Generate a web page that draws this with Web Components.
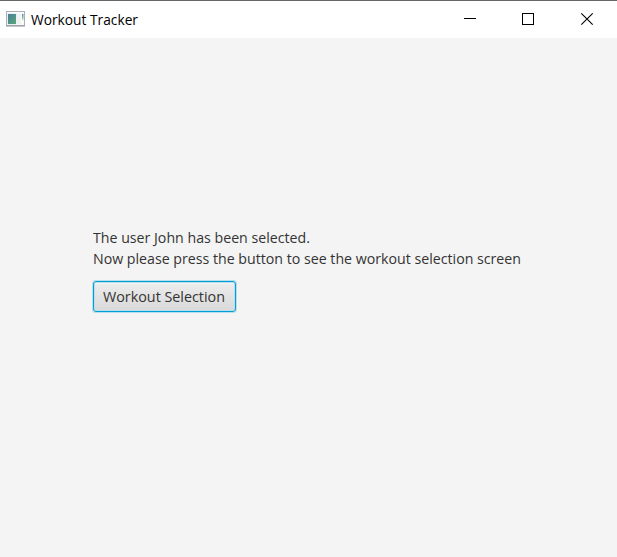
<!DOCTYPE html>
<html lang="en">
<head>
<meta charset="utf-8">
<title>Workout Tracker</title>
<style>
html,body{margin:0;height:100%;overflow:hidden;background:#f4f4f4}
</style>
</head>
<body>
<app-window>
  <title-bar slot="bar"><fit-text width="107">Workout Tracker</fit-text></title-bar>
  <message-label><fit-text width="217">The user John has been selected.</fit-text><fit-text width="428">Now please press the button to see the workout selection screen</fit-text></message-label>
  <push-button><fit-text width="122">Workout Selection</fit-text></push-button>
</app-window>
<script>
const define = (name, html, ready) => customElements.define(name, class extends HTMLElement {
  connectedCallback() {
    if (this.shadowRoot) return;
    this.attachShadow({mode: 'open'}).innerHTML = html;
    if (ready) ready(this);
  }
});

define('app-window', `
<style>
:host{display:flex;flex-direction:column;height:100vh;box-sizing:border-box;border-top:1px solid #666;background:#f4f4f4;color:#333;font:15px "Open Sans","Noto Sans",sans-serif}
main{flex:1;display:flex;flex-direction:column;align-items:flex-start;gap:12px;padding:189px 93px 0}
</style>
<slot name="bar"></slot><main><slot></slot></main>`);

define('title-bar', `
<style>
:host{display:flex;align-items:center;height:37px;background:#fff;color:#000}
.icon{margin:0 6px 1px 6px;flex:none}
.name{flex:1;padding-bottom:2px}
.controls{display:flex;height:37px}
.controls svg{display:block;height:37px}
</style>
<svg class="icon" width="19" height="16" viewBox="0 0 19 16">
  <defs><linearGradient id="g" x1="0" y1="0" x2="1" y2="1"><stop stop-color="#4a7d9c"/><stop offset="1" stop-color="#58a979"/></linearGradient>
  <linearGradient id="h" x1="0" y1="0" x2="0" y2="1"><stop stop-color="#5585a8"/><stop offset=".5" stop-color="#7cb898"/><stop offset="1" stop-color="#f3f6f6"/></linearGradient></defs>
  <rect x=".5" y=".5" width="18" height="14" fill="#fbfbfb" stroke="#aab0b6"/>
  <path d="M0 15h19" stroke="#8d9298"/>
  <rect x="1.5" y="2.5" width="9" height="11" fill="#dce6e9"/>
  <rect x="2" y="3" width="8" height="10" fill="url(#g)"/>
  <rect x="11" y="3" width="4" height="10" fill="#eff1f3"/>
  <rect x="16" y="3" width="1.5" height="7" fill="url(#h)"/>
</svg>
<div class="name"><slot></slot></div>
<div class="controls">
  <svg style="width:58px" viewBox="0 0 58 37"><path d="M23 17.5h12" stroke="#000"/></svg>
  <svg style="width:59px" viewBox="0 0 59 37"><rect x="23.5" y="12.5" width="11" height="11" fill="none" stroke="#000"/></svg>
  <svg style="width:59px" viewBox="0 0 59 37"><path d="M23.3 12.3l11.4 11.4M34.7 12.3L23.3 23.7" stroke="#000" stroke-width="1.1"/></svg>
</div>`);

define('message-label', `<style>:host{display:flex;flex-direction:column;line-height:21px}</style><slot></slot>`);

define('push-button', `
<style>
:host{display:block}
button{display:flex;align-items:center;box-sizing:border-box;width:143px;height:31px;margin:0;padding:0 0 2px 9px;border:1px solid #039ed3;border-radius:3px;background:linear-gradient(#ededed,#d9d9d9);box-shadow:0 0 0 1px rgba(3,158,211,.25),inset 0 0 0 1px #b9dfee,inset 0 2px 0 #f2f2f2;font:inherit;color:#333}
</style><button><slot></slot></button>`);

/* Condenses its text horizontally to the given advance width. */
define('fit-text', `<style>:host{display:block;white-space:nowrap}span{display:inline-block;transform-origin:0 50%}</style><span><slot></slot></span>`, el => {
  const span = el.shadowRoot.querySelector('span');
  const fit = () => {
    span.style.transform = 'none';
    span.style.transform = `scaleX(${el.getAttribute('width') / span.getBoundingClientRect().width})`;
  };
  requestAnimationFrame(fit);
  fit();
});
</script>
</body>
</html>
